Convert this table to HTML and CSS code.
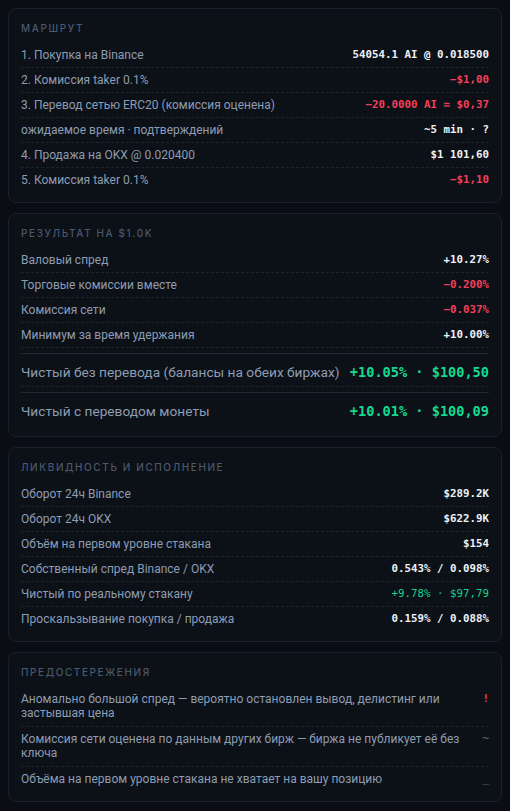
FILE: index.html
```html
<!DOCTYPE html>
<html lang="ru">
<head>
<meta charset="utf-8">
<link rel="stylesheet" href="styles.css">
</head>
<body>
<section class="card">
  <h2 class="card-title">Маршрут</h2>
  <div class="row"><span class="label">1. Покупка на Binance</span><span class="val">54054.1 AI @ 0.018500</span></div>
  <div class="row"><span class="label">2. Комиссия taker 0.1%</span><span class="val neg">−$1,00</span></div>
  <div class="row"><span class="label">3. Перевод сетью ERC20 (комиссия оценена)</span><span class="val neg">−20.0000 AI ≈ $0,37</span></div>
  <div class="row"><span class="label">ожидаемое время · подтверждений</span><span class="val">~5 min · ?</span></div>
  <div class="row"><span class="label">4. Продажа на OKX @ 0.020400</span><span class="val">$1 101,60</span></div>
  <div class="row"><span class="label">5. Комиссия taker 0.1%</span><span class="val neg">−$1,10</span></div>
</section>

<section class="card">
  <h2 class="card-title">Результат на $1.0K</h2>
  <div class="row"><span class="label">Валовый спред</span><span class="val">+10.27%</span></div>
  <div class="row"><span class="label">Торговые комиссии вместе</span><span class="val neg">−0.200%</span></div>
  <div class="row"><span class="label">Комиссия сети</span><span class="val neg">−0.037%</span></div>
  <div class="row"><span class="label">Минимум за время удержания</span><span class="val">+10.00%</span></div>
  <div class="row total"><span class="label">Чистый без перевода (балансы на обеих биржах)</span><span class="val pos">+10.05% · $100,50</span></div>
  <div class="row total"><span class="label">Чистый с переводом монеты</span><span class="val pos">+10.01% · $100,09</span></div>
</section>

<section class="card">
  <h2 class="card-title">Ликвидность и исполнение</h2>
  <div class="row"><span class="label">Оборот 24ч Binance</span><span class="val">$289.2K</span></div>
  <div class="row"><span class="label">Оборот 24ч OKX</span><span class="val">$622.9K</span></div>
  <div class="row"><span class="label">Объём на первом уровне стакана</span><span class="val">$154</span></div>
  <div class="row"><span class="label">Собственный спред Binance / OKX</span><span class="val">0.543% / 0.098%</span></div>
  <div class="row"><span class="label">Чистый по реальному стакану</span><span class="val pos-soft">+9.78% · $97,79</span></div>
  <div class="row"><span class="label">Проскальзывание покупка / продажа</span><span class="val">0.159% / 0.088%</span></div>
</section>

<section class="card">
  <h2 class="card-title">Предостережения</h2>
  <div class="warn"><span class="warn-text">Аномально большой спред — вероятно остановлен вывод, делистинг или застывшая цена</span><span class="warn-mark danger">!</span></div>
  <div class="warn"><span class="warn-text">Комиссия сети оценена по данным других бирж — биржа не публикует её без ключа</span><span class="warn-mark">~</span></div>
  <div class="warn"><span class="warn-text">Объёма на первом уровне стакана не хватает на вашу позицию</span><span class="warn-mark">_</span></div>
</section>
</body>
</html>
```

FILE: styles.css
```css
html, body {
  background: #0a0d13;
}
body {
  margin: 8px;
  font-family: "Roboto", "Inter", sans-serif;
  color: #8d9db3;
  display: flex;
  flex-direction: column;
  gap: 10px;
}
.card {
  background: #0c1017;
  border: 1px solid #1a212c;
  border-radius: 8px;
  padding: 13px 12px 10px;
}
.card-title {
  margin: 0 0 8px;
  font-family: "Inter", sans-serif;
  font-size: 10px;
  line-height: 13px;
  font-weight: 500;
  letter-spacing: 1.6px;
  text-transform: uppercase;
  color: #4a596d;
}
.row {
  display: flex;
  justify-content: space-between;
  align-items: center;
  gap: 8px;
  padding: 6px 0;
  border-bottom: 1px dashed #1c2430;
}
.row:last-child {
  border-bottom: none;
}
.label {
  font-size: 12px;
  line-height: 12px;
  color: #8d9db3;
  white-space: nowrap;
}
.val {
  font-family: "DejaVu Sans Mono", "Liberation Mono", monospace;
  font-size: 10.8px;
  line-height: 12px;
  font-weight: bold;
  color: #eef2f6;
  white-space: nowrap;
}
.neg { color: #f43f5a; }
.pos-soft { color: #14d38d; font-weight: normal; }
.total {
  margin-top: 5px;
  border-top: 1px solid #1f2835;
  padding-top: 10px;
  padding-bottom: 6px;
}
.total:last-child {
  padding-bottom: 7px;
}
.total .label {
  font-size: 13.7px;
  line-height: 16px;
}
.total .val {
  font-size: 13.6px;
  line-height: 16px;
  color: #14d991;
}
.warn {
  display: flex;
  justify-content: space-between;
  align-items: flex-start;
  gap: 12px;
  padding: 5px 0;
  border-bottom: 1px dashed #1c2430;
}
.warn:last-child {
  border-bottom: none;
}
.warn-text {
  font-size: 12px;
  line-height: 14.4px;
  max-width: 450px;
}
.warn-mark {
  font-family: "DejaVu Sans Mono", monospace;
  font-size: 11px;
  line-height: 14.4px;
  color: #5d6b7e;
  width: 10px;
  text-align: right;
}
.warn-mark.danger {
  color: #f43f5a;
  font-weight: bold;
}
```
